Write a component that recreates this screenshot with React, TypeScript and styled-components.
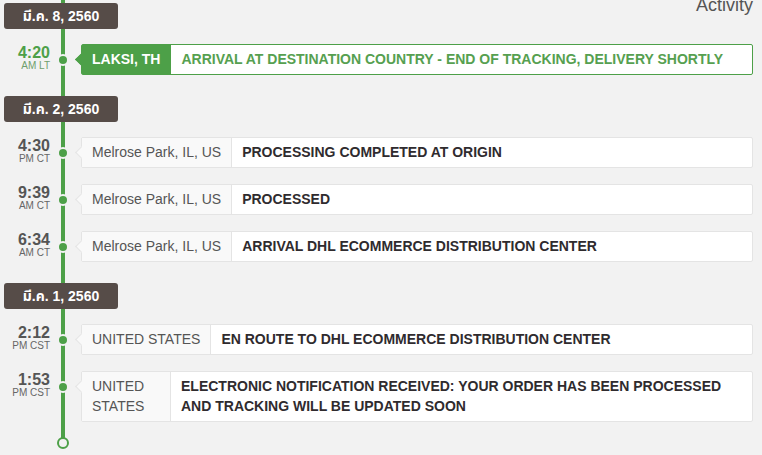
import React from "react";
import styled, { createGlobalStyle } from "styled-components";

const GREEN = "#4da048";
const BG = "#f2f2f2";

const Global = createGlobalStyle`
  html, body { margin: 0; padding: 0; background: ${BG}; }
  body { font-family: "Liberation Sans", Arial, "Noto Sans Thai", "Noto Sans", sans-serif; overflow: hidden; }
`;

const Timeline = styled.div`
  display: flex;
  flex-direction: column;
  gap: 15px;
  padding: 3px 9px 0 0;
  background-image: linear-gradient(${GREEN}, ${GREEN});
  background-repeat: no-repeat;
  background-position: 61px 0;
  background-size: 4px calc(100% - 6px);
`;

const DayGroup = styled.section`
  display: flex;
  flex-direction: column;
  gap: 15px;
  & + & { margin-top: 6px; }
`;

const DateRow = styled.div`
  display: flex;
  align-items: flex-start;
  justify-content: space-between;
`;

const DateBadge = styled.div`
  margin-left: 4px;
  width: 114px;
  height: 26px;
  border-radius: 3px;
  background: #564c48;
  color: #fff;
  font-weight: bold;
  font-size: 14px;
  line-height: 26px;
  text-align: center;
`;

const Heading = styled.h2`
  margin: -7px 0 0;
  font-size: 18px;
  line-height: 18px;
  font-weight: normal;
  color: #555;
`;

const Events = styled.div`
  display: flex;
  flex-direction: column;
  gap: 16px;
`;

const EventRow = styled.div`
  display: grid;
  grid-template-columns: 52px 22px 1fr;
  align-items: start;
`;

const TimeBlock = styled.div<{ $active?: boolean }>`
  margin-top: 1px;
  padding-right: 2px;
  text-align: right;
  color: ${(p) => (p.$active ? GREEN : "#555")};
`;

const Clock = styled.div`
  font-size: 16px;
  line-height: 16px;
  font-weight: bold;
`;

const Zone = styled.div<{ $active?: boolean }>`
  font-size: 10px;
  line-height: 10px;
  color: ${(p) => (p.$active ? "#6f9f6c" : "#666")};
`;

const Dot = styled.span`
  justify-self: center;
  margin-top: 10px;
  width: 8px;
  height: 8px;
  border-radius: 50%;
  background: ${GREEN};
  border: 2px solid ${BG};
`;

const Card = styled.div<{ $active?: boolean }>`
  position: relative;
  margin-left: 7px;
  display: flex;
  align-items: stretch;
  background: #fff;
  border: 1px solid ${(p) => (p.$active ? GREEN : "#e4e4e4")};
  border-radius: 2px;
  &::before {
    content: "";
    position: absolute;
    left: -5px;
    top: 10px;
    width: 8px;
    height: 8px;
    transform: rotate(45deg);
    background: ${(p) => (p.$active ? GREEN : "#f9f9f9")};
    border-left: 1px solid ${(p) => (p.$active ? GREEN : "#e4e4e4")};
    border-bottom: 1px solid ${(p) => (p.$active ? GREEN : "#e4e4e4")};
  }
`;

const Place = styled.div<{ $active?: boolean; $narrow?: boolean }>`
  position: relative;
  flex: 0 0 auto;
  padding: 4px 10px 5px;
  font-size: 14px;
  line-height: 20px;
  white-space: ${(p) => (p.$narrow ? "normal" : "nowrap")};
  width: ${(p) => (p.$narrow ? "68px" : "auto")};
  background: ${(p) => (p.$active ? GREEN : "#f9f9f9")};
  color: ${(p) => (p.$active ? "#fff" : "#555")};
  font-weight: ${(p) => (p.$active ? "bold" : "normal")};
  border-right: 1px solid ${(p) => (p.$active ? GREEN : "#e4e4e4")};
`;

const Status = styled.div<{ $active?: boolean }>`
  flex: 1 1 auto;
  padding: 4px 10px 5px;
  font-size: 14px;
  line-height: 20px;
  font-weight: bold;
  color: ${(p) => (p.$active ? "#56a050" : "#2f2b2e")};
`;

const EndCap = styled.div`
  margin-left: 57px;
  width: 8px;
  height: 8px;
  border-radius: 50%;
  border: 2.5px solid ${GREEN};
  background: ${BG};
`;

type Ev = { time: string; zone: string; place: string; status: string; active?: boolean; narrow?: boolean };
type Day = { date: string; events: Ev[] };

const days: Day[] = [
  {
    date: "มี.ค. 8, 2560",
    events: [
      {
        time: "4:20",
        zone: "AM LT",
        place: "LAKSI, TH",
        status: "ARRIVAL AT DESTINATION COUNTRY - END OF TRACKING, DELIVERY SHORTLY",
        active: true,
      },
    ],
  },
  {
    date: "มี.ค. 2, 2560",
    events: [
      { time: "4:30", zone: "PM CT", place: "Melrose Park, IL, US", status: "PROCESSING COMPLETED AT ORIGIN" },
      { time: "9:39", zone: "AM CT", place: "Melrose Park, IL, US", status: "PROCESSED" },
      { time: "6:34", zone: "AM CT", place: "Melrose Park, IL, US", status: "ARRIVAL DHL ECOMMERCE DISTRIBUTION CENTER" },
    ],
  },
  {
    date: "มี.ค. 1, 2560",
    events: [
      { time: "2:12", zone: "PM CST", place: "UNITED STATES", status: "EN ROUTE TO DHL ECOMMERCE DISTRIBUTION CENTER" },
      {
        time: "1:53",
        zone: "PM CST",
        place: "UNITED STATES",
        status: "ELECTRONIC NOTIFICATION RECEIVED: YOUR ORDER HAS BEEN PROCESSED AND TRACKING WILL BE UPDATED SOON",
        narrow: true,
      },
    ],
  },
];

export default function App() {
  return (
    <>
      <Global />
      <Timeline>
        {days.map((d, i) => (
          <DayGroup key={d.date}>
            <DateRow>
              <DateBadge>{d.date}</DateBadge>
              {i === 0 && <Heading>Activity</Heading>}
            </DateRow>
            <Events>
              {d.events.map((e) => (
                <EventRow key={e.time + e.status}>
                  <TimeBlock $active={e.active}>
                    <Clock>{e.time}</Clock>
                    <Zone $active={e.active}>{e.zone}</Zone>
                  </TimeBlock>
                  <Dot />
                  <Card $active={e.active}>
                    <Place $active={e.active} $narrow={e.narrow}>{e.place}</Place>
                    <Status $active={e.active}>{e.status}</Status>
                  </Card>
                </EventRow>
              ))}
            </Events>
          </DayGroup>
        ))}
        <EndCap />
      </Timeline>
    </>
  );
}
